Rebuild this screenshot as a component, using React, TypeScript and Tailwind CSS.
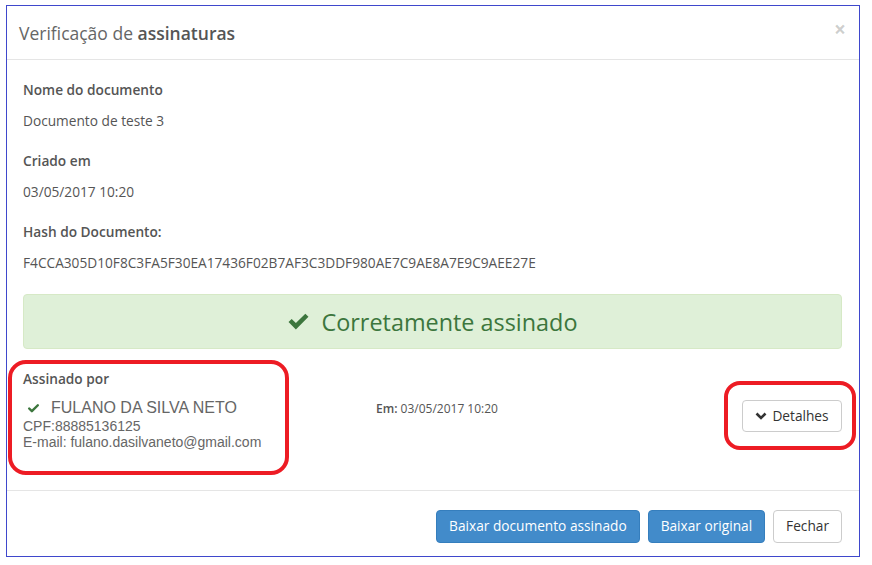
import { Check } from "lucide-react";

const openSans = { fontFamily: '"Open Sans", "Liberation Sans", sans-serif' };

function OkIcon({ className }: { className?: string }) {
  // bold glyphicon-style check mark
  return (
    <svg viewBox="0 0 20 16" className={className} aria-hidden>
      <path d="M0.5 8.5 L3.5 5.5 L7.5 9.5 L16.5 0.5 L19.5 3.5 L7.5 15.5 Z" fill="currentColor" />
    </svg>
  );
}

function ChevronIcon() {
  return (
    <svg viewBox="0 0 12 8" className="h-[8px] w-[12px] text-[#333]" aria-hidden>
      <path d="M1.5 1.5 L6 6 L10.5 1.5" fill="none" stroke="currentColor" strokeWidth="2.6" />
    </svg>
  );
}

function Field({ label, value, first }: { label: string; value: string; first?: boolean }) {
  return (
    <div className={first ? "" : "mt-[20px]"}>
      <div className="text-[13.7px] font-semibold leading-[20px] text-[#555]">{label}</div>
      <div className="mt-[11px] text-[13.7px] leading-[20px] text-[#555]">{value}</div>
    </div>
  );
}

export default function App() {
  return (
    <div className="relative min-h-screen bg-white pl-[6px] pt-[5px]" style={openSans}>
      <div className="flex h-[552px] w-[854px] flex-col border border-[#3f48cc] bg-white">
        <div className="flex h-[54px] shrink-0 items-center justify-between border-b border-[#e5e5e5] pl-[12px] pr-[13px]">
          <h4 className="text-[17.5px] leading-[24px] text-[#666]">
            Verificação de <span className="font-semibold text-[#555]">assinaturas</span>
          </h4>
          <span className="-mt-[7px] text-[21px] font-bold leading-none text-black/20">×</span>
        </div>

        <div className="flex-1 pl-[16px] pr-[17px] pt-[20px]">
          <Field first label="Nome do documento" value="Documento de teste 3" />
          <Field label="Criado em" value="03/05/2017 10:20" />
          <Field label="Hash do Documento:" value="F4CCA305D10F8C3FA5F30EA17436F02B7AF3C3DDF980AE7C9AE8A7E9C9AEE27E" />

          <div className="mt-[21px] flex h-[55px] items-center justify-center gap-[13px] rounded-[4px] border border-[#d6e9c6] bg-[#dff0d8] text-[#3c763d]">
            <OkIcon className="h-[17px] w-[21px]" />
            <span className="text-[23.4px] leading-[32px]">Corretamente assinado</span>
          </div>

          <div className="mt-[20px] flex">
            <div className="w-[353px]">
              <div className="text-[13.7px] font-semibold leading-[20px] text-[#555]">Assinado por</div>
              <div
                className="mt-[9px] text-[#666]"
                style={{ fontFamily: '"Liberation Sans", Arial, sans-serif' }}
              >
                <div className="flex h-[20px] items-center">
                  <Check className="ml-[4px] h-[13px] w-[13px] text-[#3c763d]" strokeWidth={4.5} />
                  <span className="ml-[11px] text-[16px] leading-[20px]">FULANO DA SILVA NETO</span>
                </div>
                <div className="text-[14px] leading-[16px]">CPF:88885136125</div>
                <div className="text-[14px] leading-[16px]">E-mail: fulano.dasilvaneto@gmail.com</div>
              </div>
            </div>
            <div className="pt-[31px] text-[12px] leading-[18px] text-[#555]">
              <span className="font-semibold">Em:</span> 03/05/2017 10:20
            </div>
            <div className="ml-auto pt-[31px]">
              <button
                type="button"
                className="flex h-[32px] w-[100px] items-center justify-center gap-[5px] rounded-[4px] border border-[#ccc] bg-white text-[13.7px] text-[#333]"
              >
                <ChevronIcon />
                Detalhes
              </button>
            </div>
          </div>
        </div>

        <div className="flex h-[66px] shrink-0 items-start justify-end gap-[8px] border-t border-[#e5e5e5] pr-[17px] pt-[19px]">
          <button
            type="button"
            className="h-[33px] rounded-[4px] border border-[#357ebd] bg-[#428bca] px-[12px] text-[13.7px] text-white"
          >
            Baixar documento assinado
          </button>
          <button
            type="button"
            className="h-[33px] rounded-[4px] border border-[#357ebd] bg-[#428bca] px-[12px] text-[13.7px] text-white"
          >
            Baixar original
          </button>
          <button
            type="button"
            className="h-[33px] rounded-[4px] border border-[#ccc] bg-white px-[12px] text-[13.7px] text-[#333]"
          >
            Fechar
          </button>
        </div>
      </div>

      <div className="pointer-events-none absolute left-[8px] top-[360px] h-[115px] w-[281px] rounded-[18px] border-[4px] border-[#ed1c24]" />
      <div className="pointer-events-none absolute left-[724px] top-[381px] h-[69px] w-[132px] rounded-[16px] border-[4px] border-[#ed1c24]" />
    </div>
  );
}
